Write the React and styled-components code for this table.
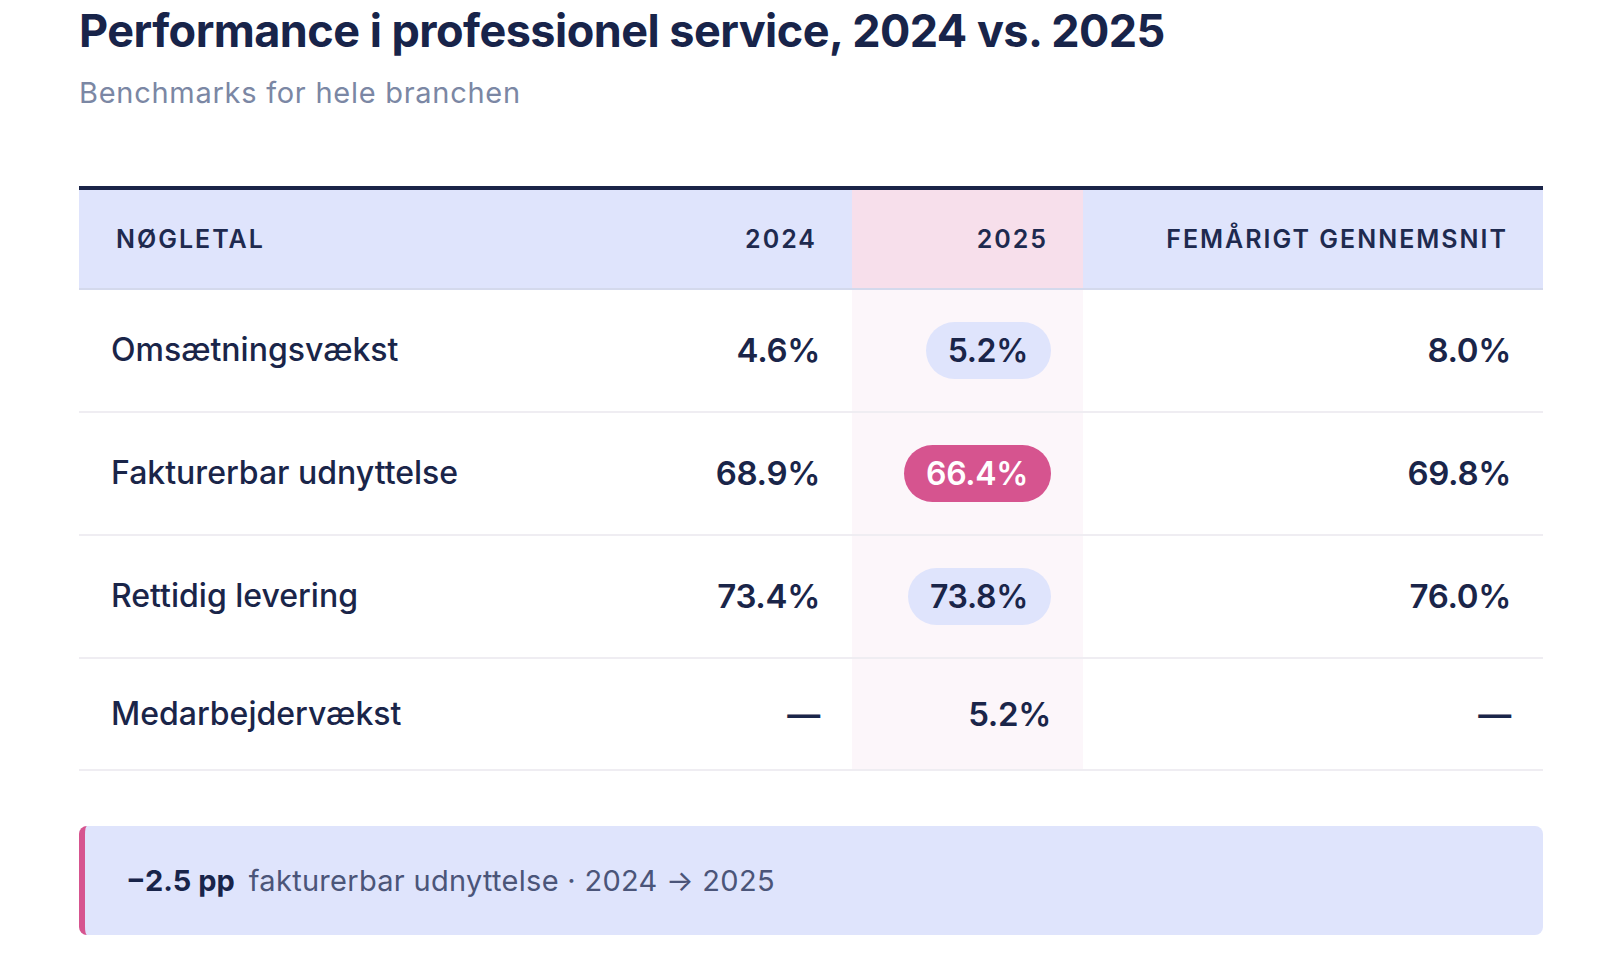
import React from 'react';
import styled, { createGlobalStyle } from 'styled-components';

const GlobalStyle = createGlobalStyle`
  body {
    margin: 0;
    background: #ffffff;
    font-family: Inter, "Noto Sans", sans-serif;
    color: #1a2549;
  }
`;

const Page = styled.div`
  width: 1464px;
  padding: 4px 0 40px 79px;
`;

const Title = styled.h1`
  margin: 0;
  font-size: 45px;
  line-height: 1.2;
  font-weight: 700;
  letter-spacing: -0.012em;
  color: #18244a;
`;

const Subtitle = styled.p`
  margin: 16px 0 0;
  font-size: 29px;
  line-height: 1.3;
  font-weight: 400;
  letter-spacing: 0.025em;
  color: #7b87a4;
`;

const Table = styled.div`
  margin-top: 74px;
  border-top: 4px solid #1a2448;
`;

const COLS = '520px 253px 231px 460px';

const HeaderRow = styled.div`
  display: grid;
  grid-template-columns: ${COLS};
  height: 98px;
  background: #dfe4fc;
  border-bottom: 2px solid #d4d9ec;
`;

const HeadCell = styled.div`
  display: flex;
  align-items: center;
  justify-content: ${p => (p.$left ? 'flex-start' : 'flex-end')};
  padding: 0 35px 0 37px;
  font-size: 25px;
  font-weight: 600;
  letter-spacing: 0.08em;
  color: #1e2a4f;
  background: ${p => (p.$hl ? '#f7dfeb' : 'transparent')};
`;

const BodyRow = styled.div`
  display: grid;
  grid-template-columns: ${COLS};
  border-bottom: 2px solid #efedf2;
`;

const Cell = styled.div`
  display: flex;
  align-items: center;
  justify-content: ${p => (p.$left ? 'flex-start' : 'flex-end')};
  padding: 32px 32px;
  min-height: 46px;
  background: ${p => (p.$hl ? '#fcf6fa' : 'transparent')};
`;

const Label = styled.span`
  font-size: 32px;
  font-weight: 500;
  line-height: 46px;
  color: #1a2549;
`;

const Value = styled.span`
  font-size: 33px;
  font-weight: 600;
  line-height: 46px;
  letter-spacing: -0.01em;
  color: #1a2549;
`;

const Pill = styled.span`
  display: inline-flex;
  align-items: center;
  height: 57px;
  padding: 0 23px 0 22px;
  border-radius: 29px;
  font-size: 32px;
  font-weight: 600;
  letter-spacing: -0.01em;
  background: ${p => (p.$alert ? '#d6548f' : '#dfe4fc')};
  color: ${p => (p.$alert ? '#ffffff' : '#1a2549')};
`;

const Callout = styled.div`
  margin-top: 55px;
  display: flex;
  align-items: center;
  padding: 35px 40px 35px 41px;
  background: #dfe4fc;
  border-left: 6px solid #d6548f;
  border-radius: 8px;
  font-size: 29px;
  line-height: 39px;
`;

const Delta = styled.strong`
  font-weight: 700;
  color: #18244a;
  margin-right: 14px;
`;

const CalloutText = styled.span`
  color: #4b5579;
  font-weight: 400;
  letter-spacing: 0.01em;
`;

const rows = [
  { name: 'Omsætningsvækst', y24: '4.6%', y25: '5.2%', pill: 'soft', avg: '8.0%' },
  { name: 'Fakturerbar udnyttelse', y24: '68.9%', y25: '66.4%', pill: 'alert', avg: '69.8%' },
  { name: 'Rettidig levering', y24: '73.4%', y25: '73.8%', pill: 'soft', avg: '76.0%' },
  { name: 'Medarbejdervækst', y24: '—', y25: '5.2%', pill: null, avg: '—' },
];

export default function App() {
  return (
    <Page>
      <GlobalStyle />
      <Title>Performance i professionel service, 2024 vs. 2025</Title>
      <Subtitle>Benchmarks for hele branchen</Subtitle>
      <Table>
        <HeaderRow>
          <HeadCell $left>NØGLETAL</HeadCell>
          <HeadCell>2024</HeadCell>
          <HeadCell $hl>2025</HeadCell>
          <HeadCell>FEMÅRIGT GENNEMSNIT</HeadCell>
        </HeaderRow>
        {rows.map(r => (
          <BodyRow key={r.name}>
            <Cell $left>
              <Label>{r.name}</Label>
            </Cell>
            <Cell>
              <Value>{r.y24}</Value>
            </Cell>
            <Cell $hl>
              {r.pill ? <Pill $alert={r.pill === 'alert'}>{r.y25}</Pill> : <Value>{r.y25}</Value>}
            </Cell>
            <Cell>
              <Value>{r.avg}</Value>
            </Cell>
          </BodyRow>
        ))}
      </Table>
      <Callout>
        <Delta>−2.5 pp</Delta>
        <CalloutText>fakturerbar udnyttelse · 2024 → 2025</CalloutText>
      </Callout>
    </Page>
  );
}
